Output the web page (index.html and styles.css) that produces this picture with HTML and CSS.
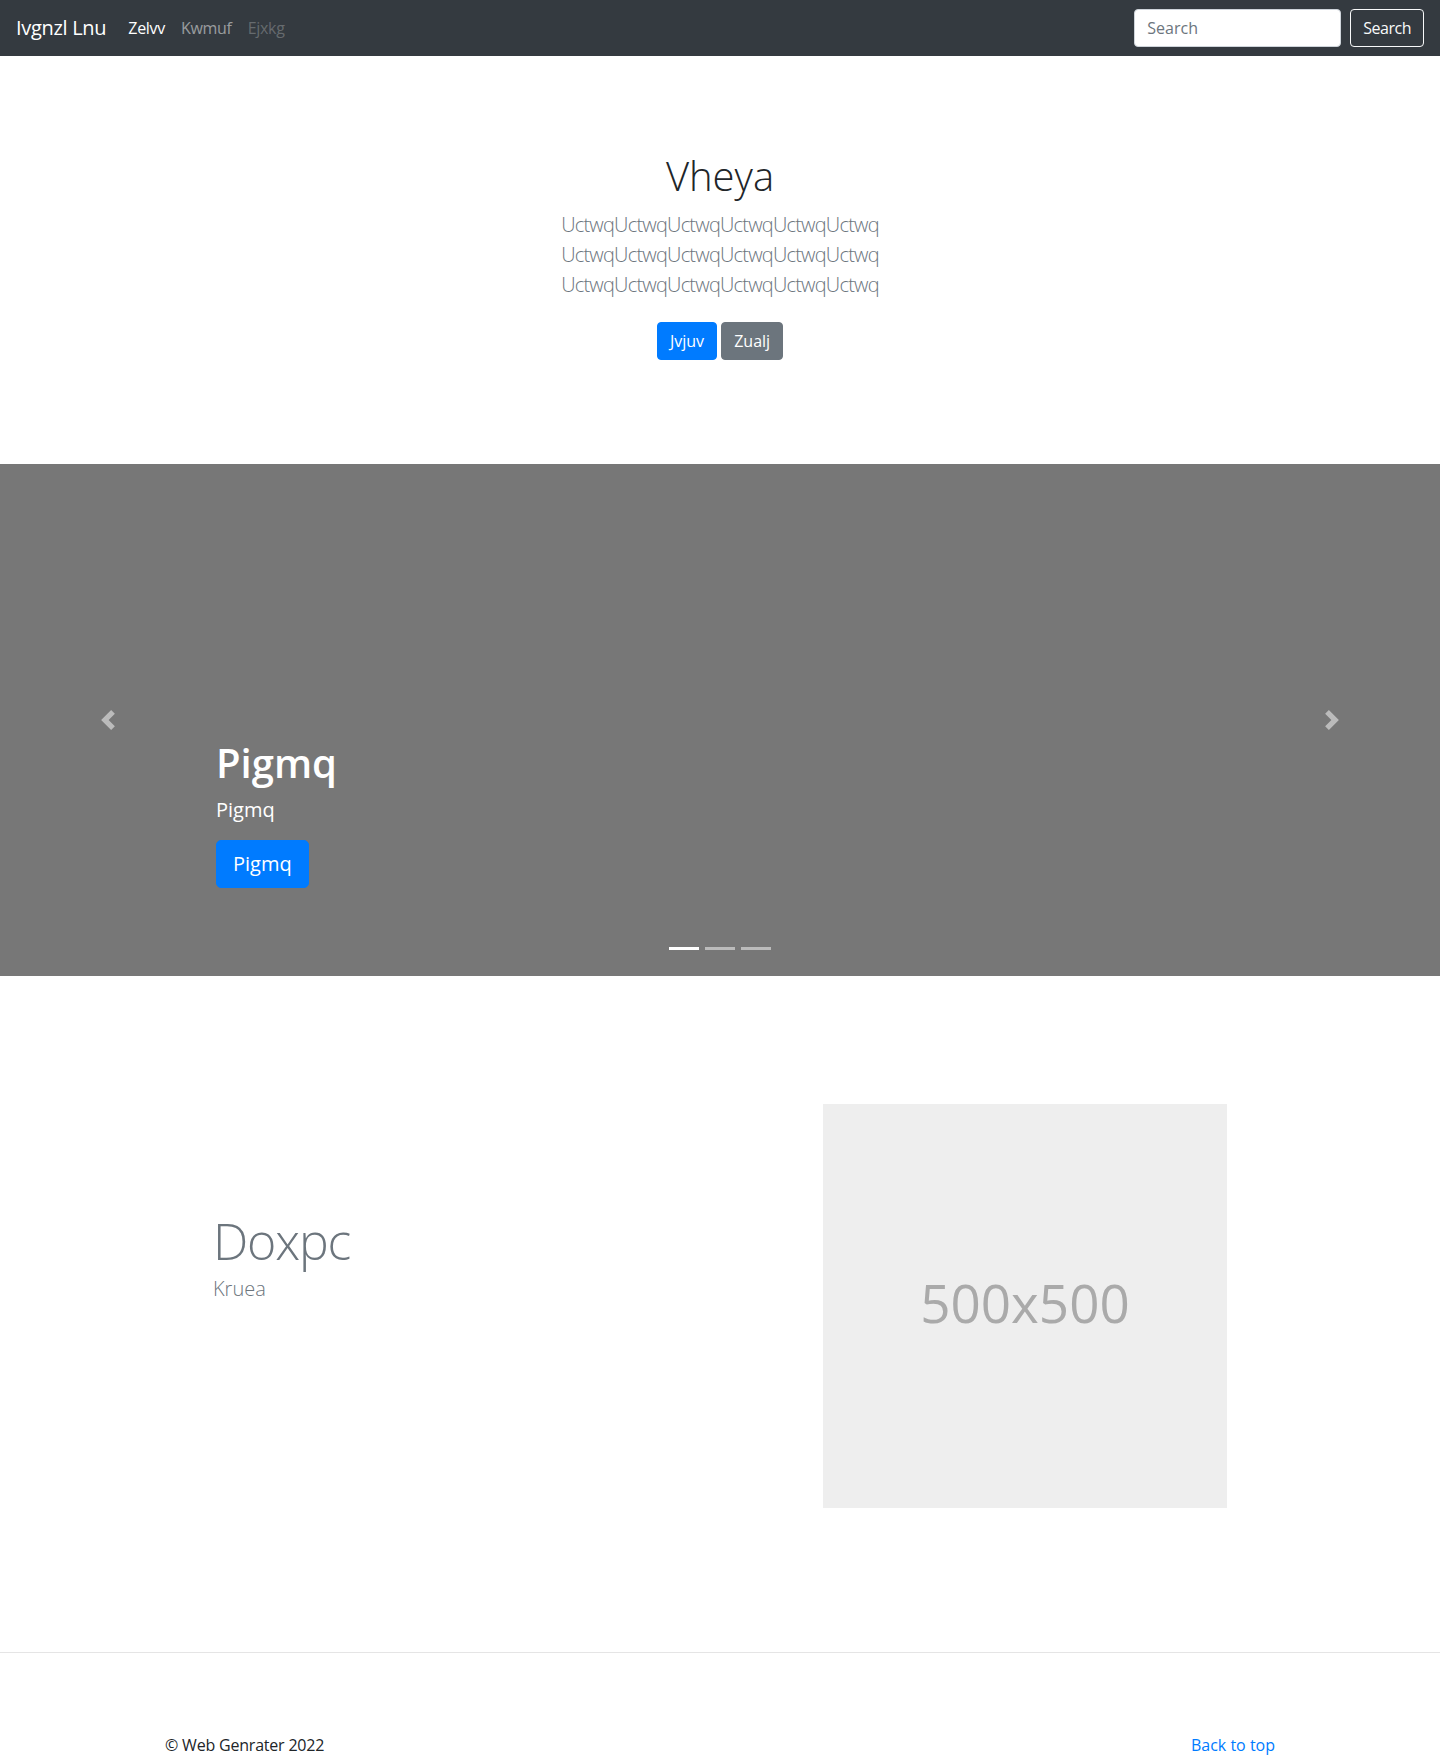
FILE: index.html
```html
<!DOCTYPE html>
<html lang="en">
<head>
<meta charset="utf-8">
<title>Ivgnzl Lnu</title>
<link rel="stylesheet" href="styles.css">
</head>
<body>
<header class="navbar">
  <a class="brand" href="#">Ivgnzl Lnu</a>
  <ul class="nav-links">
    <li><a class="nav-link active" href="#">Zelvv</a></li>
    <li><a class="nav-link" href="#">Kwmuf</a></li>
    <li><a class="nav-link disabled" href="#">Ejxkg</a></li>
  </ul>
  <form class="search-form">
    <input class="search-input" type="text" placeholder="Search">
    <button class="btn btn-outline-light" type="button">Search</button>
  </form>
</header>

<section class="hero">
  <div class="hero-inner">
    <h1 class="hero-title">Vheya</h1>
    <p class="lead muted hero-lead">UctwqUctwqUctwqUctwqUctwqUctwq UctwqUctwqUctwqUctwqUctwqUctwq UctwqUctwqUctwqUctwqUctwqUctwq</p>
    <p class="hero-actions"><a class="btn btn-primary" href="#">Jvjuv</a> <a class="btn btn-secondary" href="#">Zualj</a></p>
  </div>
</section>

<section class="carousel">
  <div class="carousel-caption">
    <h1 class="caption-title">Pigmq</h1>
    <p class="caption-text">Pigmq</p>
    <p class="caption-action"><a class="btn btn-lg btn-primary" href="#">Pigmq</a></p>
  </div>
  <a class="carousel-control prev" href="#" aria-label="Previous">
    <svg class="control-icon" viewBox="0 0 8 8" width="20" height="20"><path fill="#fff" d="M5.25 0l-4 4 4 4 1.5-1.5L4.25 4l2.5-2.5L5.25 0z"/></svg>
  </a>
  <a class="carousel-control next" href="#" aria-label="Next">
    <svg class="control-icon" viewBox="0 0 8 8" width="20" height="20"><path fill="#fff" d="M2.75 0l-1.5 1.5L3.75 4l-2.5 2.5L2.75 8l4-4-4-4z"/></svg>
  </a>
  <ol class="carousel-indicators">
    <li class="active"></li>
    <li></li>
    <li></li>
  </ol>
</section>

<main class="featurette-section">
  <div class="container featurette">
    <div class="featurette-text">
      <h2 class="featurette-heading">Doxpc</h2>
      <p class="lead muted">Kruea</p>
    </div>
    <div class="featurette-image">500x500</div>
  </div>
</main>

<hr class="divider">

<footer class="container footer">
  <p class="back-top"><a href="#">Back to top</a></p>
  <p class="copyright">© Web Genrater 2022</p>
</footer>
</body>
</html>
```

FILE: styles.css
```css
* { box-sizing: border-box; }

html, body {
  margin: 0;
  padding: 0;
}

body {
  font-family: "Open Sans", "Noto Sans", sans-serif;
  font-size: 16px;
  line-height: 1.5;
  color: #212529;
  background: #fff;
}

a { text-decoration: none; }

p { margin: 0 0 16px; }

h1, h2 { margin: 0 0 8px; }

/* Navbar */
.navbar {
  display: flex;
  align-items: center;
  height: 56px;
  padding: 8px 16px;
  background: #343a40;
}

.brand {
  font-size: 20px;
  line-height: 30px;
  padding: 5px 0;
  margin-right: 14px;
  color: #fff;
  letter-spacing: -0.3px;
}

.nav-links {
  display: flex;
  list-style: none;
  margin: 0;
  padding: 0;
}

.nav-link {
  display: block;
  padding: 8px;
  color: rgba(255, 255, 255, 0.5);
  letter-spacing: -0.3px;
}

.nav-link.active { color: #fff; }
.nav-link.disabled { color: rgba(255, 255, 255, 0.25); }

.search-form {
  display: flex;
  align-items: center;
  margin-left: auto;
}

.search-input {
  width: 207px;
  height: 38px;
  padding: 6px 12px;
  font-family: inherit;
  font-size: 16px;
  color: #495057;
  background: #fff;
  border: 1px solid #ced4da;
  border-radius: 4px;
  margin-right: 9px;
}

.search-input::placeholder { color: #6c757d; }

/* Buttons */
.btn {
  display: inline-block;
  font-family: inherit;
  font-size: 16px;
  line-height: 24px;
  padding: 6px 12px;
  border: 1px solid transparent;
  border-radius: 4px;
  color: #fff;
  vertical-align: middle;
  background: transparent;
}

.btn-outline-light {
  color: #f8f9fa;
  border-color: #f8f9fa;
  letter-spacing: -0.5px;
}

.btn-primary { background: #007bff; border-color: #007bff; }
.btn-secondary { background: #6c757d; border-color: #6c757d; }

.btn-lg {
  font-size: 20px;
  line-height: 30px;
  padding: 8px 16px;
  border-radius: 5px;
}

/* Hero */
.hero {
  padding: 96px 16px 80px;
  text-align: center;
}

.hero-inner {
  max-width: 540px;
  margin: 0 auto;
}

.hero-title {
  font-size: 40px;
  line-height: 1.2;
  font-weight: 300;
  color: #212529;
  margin-bottom: 10px;
}

.lead {
  font-size: 20px;
  line-height: 30px;
  font-weight: 300;
}

.hero-lead {
  letter-spacing: -0.8px;
  margin-bottom: 14px;
}

.muted { color: #6c757d; }

.hero-actions .btn { margin: 8px 0; }

/* Carousel */
.carousel {
  position: relative;
  height: 512px;
  background: #777;
}

.carousel-caption {
  position: absolute;
  left: 15%;
  right: 15%;
  bottom: 52px;
  padding: 20px 0;
  color: #fff;
  text-align: left;
}

.caption-title {
  font-size: 40px;
  line-height: 1.2;
  font-weight: 600;
}

.caption-text {
  font-size: 20px;
  line-height: 30px;
  margin-bottom: 15px;
}

.carousel-control {
  position: absolute;
  top: 0;
  bottom: 0;
  width: 15%;
  display: flex;
  align-items: center;
  justify-content: center;
  opacity: 0.5;
}

.carousel-control.prev { left: 0; }
.carousel-control.next { right: 0; }

.control-icon { display: block; }

.carousel-indicators {
  position: absolute;
  left: 0;
  right: 0;
  bottom: 0;
  display: flex;
  justify-content: center;
  list-style: none;
  margin: 0 15% 16px;
  padding: 0;
}

.carousel-indicators li {
  width: 30px;
  height: 23px;
  margin: 0 3px;
  border-top: 10px solid transparent;
  border-bottom: 10px solid transparent;
  background: #fff;
  background-clip: padding-box;
  opacity: 0.5;
}

.carousel-indicators li.active { opacity: 1; }

/* Featurette */
.container {
  max-width: 1140px;
  margin: 0 auto;
  padding: 0 15px;
}

.featurette-section {
  padding: 128px 0 64px;
}

.featurette {
  display: grid;
  grid-template-columns: 1fr 404px;
  padding: 0 63px;
}

.featurette-heading {
  margin: 112px 0 8px;
  font-size: 50px;
  line-height: 1;
  font-weight: 300;
  letter-spacing: -1.2px;
  color: #6c757d;
}

.featurette-image {
  width: 404px;
  height: 404px;
  padding-bottom: 6px;
  background: #eee;
  color: #aaa;
  font-size: 53px;
  display: flex;
  align-items: center;
  justify-content: center;
}

/* Footer */
.divider {
  margin: 80px 0;
  border: 0;
  border-top: 1px solid rgba(0, 0, 0, 0.1);
}

.footer {
  padding-bottom: 48px;
}

.back-top {
  float: right;
}

.back-top a { color: #007bff; }

.copyright { letter-spacing: -0.2px; }
```
